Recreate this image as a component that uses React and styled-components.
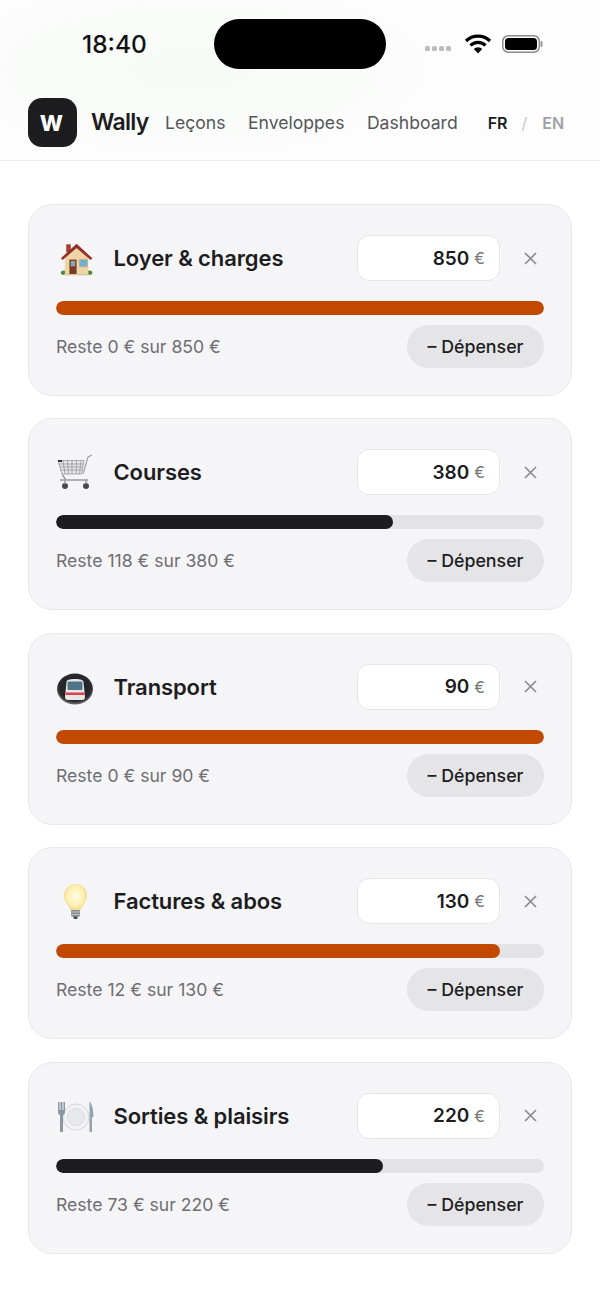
import React from 'react';
import styled, { createGlobalStyle } from 'styled-components';

const GlobalStyle = createGlobalStyle`
  html, body {
    margin: 0;
    padding: 0;
    background: #fff;
    font-family: Inter, "Liberation Sans", sans-serif;
    color: #1d1d1f;
  }
`;

const Page = styled.div`
  width: 600px;
  height: 1298px;
  overflow: hidden;
  background: #fff;
`;

const Header = styled.header`
  height: 161px;
  box-sizing: border-box;
  border-bottom: 1px solid #ececee;
  background: radial-gradient(ellipse 300px 110px at 190px 70px, #f6faf6 0%, rgba(250, 252, 250, 0) 100%), #fdfdfd;
`;

const StatusBar = styled.div`
  height: 98px;
  box-sizing: border-box;
  padding-top: 19px;
  display: flex;
  align-items: flex-start;
`;

const Clock = styled.div`
  width: 214px;
  box-sizing: border-box;
  padding: 11px 0 0 82px;
  font-size: 24.5px;
  line-height: 28px;
  font-weight: 500;
  color: #111;
`;

const Island = styled.div`
  width: 172px;
  height: 50px;
  border-radius: 25px;
  background: #000;
`;

const StatusIcons = styled.div`
  display: flex;
  align-items: center;
  margin-left: 39px;
  padding-top: 12px;
  height: 25px;
`;

const SignalDots = styled.div`
  display: flex;
  gap: 2.5px;
  margin: 10px 13px 0 0;
`;

const SignalDot = styled.span`
  width: 4.5px;
  height: 5px;
  border-radius: 1.5px;
  background: #bdbdbd;
`;

const Nav = styled.nav`
  display: flex;
  align-items: center;
  height: 49px;
  padding-left: 28px;
`;

const Logo = styled.div`
  width: 49px;
  height: 49px;
  border-radius: 14px;
  background: #1d1d1f;
  color: #fff;
  display: flex;
  align-items: center;
  justify-content: center;
  font-size: 22px;
  font-weight: 800;
  padding-right: 2px;
  box-sizing: border-box;
`;

const Brand = styled.div`
  margin: -1px 0 0 14px;
  width: 74px;
  font-size: 23px;
  font-weight: 600;
  letter-spacing: -0.7px;
  color: #1d1d1f;
`;

const NavLinks = styled.div`
  display: flex;
  gap: 22.5px;
`;

const NavLink = styled.a`
  font-size: 17.6px;
  color: #56565a;
`;

const Lang = styled.div`
  display: flex;
  align-items: center;
  margin-left: 30px;
  font-size: 16px;
  font-weight: 600;
`;

const LangItem = styled.span`
  color: ${(p) => p.$color};
  font-weight: ${(p) => p.$weight || 600};
  margin-left: ${(p) => p.$gap || 0}px;
`;

const List = styled.main`
  display: flex;
  flex-direction: column;
  gap: 22.4px;
  padding: 43px 28px 0;
`;

const Card = styled.section`
  height: 192px;
  box-sizing: border-box;
  padding: 30px 27px 0;
  background: #f5f5f7;
  border: 1px solid #e8e8ea;
  border-radius: 24px;
`;

const TopRow = styled.div`
  display: flex;
  align-items: center;
  height: 46px;
`;

const Emoji = styled.svg`
  width: 38px;
  height: 38px;
  flex: none;
`;

const Title = styled.h2`
  flex: 1;
  margin: 0 0 0 19.5px;
  font-size: 22px;
  font-weight: 600;
  letter-spacing: -0.1px;
  color: #1d1d1f;
`;

const AmountBox = styled.div`
  width: 143px;
  height: 46px;
  box-sizing: border-box;
  padding-right: 14px;
  display: flex;
  align-items: center;
  justify-content: flex-end;
  gap: 5px;
  background: #fff;
  border: 1px solid #e6e6e8;
  border-radius: 12px;
`;

const Amount = styled.span`
  font-size: 19px;
  font-weight: 600;
  color: #1d1d1f;
`;

const Currency = styled.span`
  font-size: 16px;
  color: #77777b;
`;

const RemoveButton = styled.button`
  width: 44px;
  height: 46px;
  padding: 0 0 0 16px;
  border: 0;
  background: none;
  display: flex;
  align-items: center;
  justify-content: center;
  color: #8a8a8e;
`;

const Track = styled.div`
  height: 14px;
  margin-top: 20px;
  border-radius: 7px;
  background: #e3e3e5;
  overflow: hidden;
`;

const Fill = styled.div`
  height: 100%;
  border-radius: 7px;
  background: ${(p) => (p.$alert ? '#c24a00' : '#1d1d1f')};
`;

const BottomRow = styled.div`
  display: flex;
  align-items: center;
  justify-content: space-between;
  margin-top: 10px;
`;

const Remaining = styled.span`
  font-size: 17.6px;
  color: #6e6e73;
`;

const SpendButton = styled.button`
  height: 43px;
  width: 137px;
  padding: 0;
  border: 0;
  border-radius: 22px;
  background: #e5e5e7;
  font-family: inherit;
  font-size: 17.8px;
  font-weight: 500;
  color: #1d1d1f;
`;

const House = () => (
  <Emoji viewBox="0 0 38 38">
    <g transform="translate(3.500 3.500) scale(0.9)">
      <ellipse cx="5" cy="33.500" rx="3.500" ry="2.500" fill="#4d8a35" />
      <ellipse cx="33" cy="33.500" rx="3.500" ry="2.500" fill="#4d8a35" />
      <rect x="7.500" y="2" width="5" height="9" fill="#a33f30" />
      <path d="M6 15 19 4l13 11v21H6z" fill="#f0d5a4" />
      <path d="M1.500 17.500 19 1.500l17.500 16-2 2L19 6 3.500 19.500z" fill="#93302a" />
      <rect x="11" y="19" width="8" height="17" fill="#7a3a26" />
      <rect x="12.500" y="20.500" width="5" height="6" fill="#7fa6bb" />
      <rect x="22" y="19" width="9" height="8" fill="#6fb0d6" stroke="#c8b082" />
      <rect x="5" y="35" width="28" height="1.500" fill="#d9c8a3" />
    </g>
  </Emoji>
);

const Cart = () => (
  <Emoji viewBox="0 0 38 38">
    <g fill="none" stroke="#8d8d92" strokeWidth="0.7">
      <path d="M2 7.500h26l-2.500 13.500H6z" fill="#e8e8ea" />
      <path d="M3 11h24.500M3.800 14h23M4.600 17h21.500M7 7.500 9 21M11.500 7.500l1 13.500M16 7.500v13.500M20.500 7.500 20 21M25 7.500 23.500 21" />
    </g>
    <path d="M27 21 32 4l4-2" fill="none" stroke="#a6a6aa" strokeWidth="1.300" />
    <path d="M6 21.500 10 27H30M4 27h28" fill="none" stroke="#9b9b9f" strokeWidth="1.400" />
    <rect x="2" y="7" width="4" height="2" fill="#333" />
    <circle cx="9" cy="33" r="3" fill="#4a4a4e" />
    <circle cx="30" cy="33" r="3" fill="#4a4a4e" />
    <path d="M9 27v4M30 27v4" stroke="#9b9b9f" strokeWidth="1.400" />
  </Emoji>
);

const Metro = () => (
  <Emoji viewBox="0 0 38 38">
    <defs>
      <radialGradient id="tunnelShade" cx="50%" cy="45%" r="55%">
        <stop offset="0" stopColor="#1b1b1d" />
        <stop offset="0.82" stopColor="#2a2a2c" />
        <stop offset="1" stopColor="#77777b" />
      </radialGradient>
    </defs>
    <ellipse cx="19" cy="21" rx="18" ry="15.500" fill="url(#tunnelShade)" />
    <path d="M10.500 14c0-2 2.500-3 8.500-3s8.500 1 8.500 3l1.500 15c0 2-1 3-3 3H12c-2 0-3-1-3-3z" fill="#e6e6e8" />
    <rect x="11.500" y="13.500" width="15" height="8.500" rx="1.200" fill="#4d7487" />
    <rect x="9.500" y="24.500" width="19" height="2.500" fill="#d8404c" />
    <circle cx="12.500" cy="29.500" r="1.200" fill="#f5f1c8" />
    <circle cx="25.500" cy="29.500" r="1.200" fill="#f5f1c8" />
  </Emoji>
);

const Bulb = () => (
  <Emoji viewBox="0 0 38 38">
    <defs>
      <radialGradient id="bulbGlow" cx="50%" cy="45%" r="55%">
        <stop offset="0" stopColor="#fffde8" />
        <stop offset="0.65" stopColor="#fdf0b0" />
        <stop offset="1" stopColor="#ecd58a" />
      </radialGradient>
    </defs>
    <path d="M19.500 2a11.500 11.500 0 0 0-11.500 12c0 6 5 9 7 15h9c2-6 7-9 7-15A11.500 11.500 0 0 0 19.500 2z" fill="url(#bulbGlow)" />
    <rect x="15" y="28" width="9" height="6.500" rx="1" fill="#85888c" />
    <path d="M15 30h9M15 32.500h9" stroke="#c3c5c8" />
    <path d="M17 34.500h5l-1 2.500h-3z" fill="#45474a" />
  </Emoji>
);

const Plate = () => (
  <Emoji viewBox="0 0 38 38">
    <circle cx="20" cy="20" r="13" fill="#f2f2f4" stroke="#d8d9dc" />
    <circle cx="20" cy="20" r="8.500" fill="#e8e9eb" stroke="#dcdde0" />
    <path d="M2 5v10c0 2 1 3 2 3v17h3V18c1 0 2-1 2-3V5H7.500v8h-1V5H4.500v8h-1V5z" fill="#8a96a0" />
    <path d="M33.500 4c2.500 3 4 9 4 16H36v15h-2.500z" fill="#93a3ae" />
  </Emoji>
);

const envelopes = [
  { name: 'Loyer & charges', budget: 850, left: 0, fill: 100, alert: true, icon: <House /> },
  { name: 'Courses', budget: 380, left: 118, fill: 69, alert: false, icon: <Cart /> },
  { name: 'Transport', budget: 90, left: 0, fill: 100, alert: true, icon: <Metro /> },
  { name: 'Factures & abos', budget: 130, left: 12, fill: 91, alert: true, icon: <Bulb /> },
  { name: 'Sorties & plaisirs', budget: 220, left: 73, fill: 67, alert: false, icon: <Plate /> },
];

function App() {
  return (
    <Page>
      <GlobalStyle />
      <Header>
        <StatusBar>
          <Clock>18:40</Clock>
          <Island />
          <StatusIcons>
            <SignalDots>
              <SignalDot />
              <SignalDot />
              <SignalDot />
              <SignalDot />
            </SignalDots>
            <svg width="28" height="21" viewBox="0 0 28 21" fill="none" stroke="#000" strokeWidth="3.200">
              <path d="M2 8a17 17 0 0 1 24 0" />
              <path d="M6.500 12.500a10.500 10.500 0 0 1 15 0" />
              <path d="M14 20.500 9.800 16a6 6 0 0 1 8.400 0z" fill="#000" stroke="none" />
            </svg>
            <svg width="41" height="20" viewBox="0 0 41 20" style={{ marginLeft: 10 }}>
              <rect x="0.750" y="1.750" width="36.500" height="16.500" rx="5.500" fill="none" stroke="#8a8a8a" strokeWidth="1.500" />
              <rect x="3" y="4" width="32" height="12" rx="3.500" fill="#000" />
              <rect x="38.500" y="7" width="2" height="6" rx="1" fill="#9a9a9a" />
            </svg>
          </StatusIcons>
        </StatusBar>
        <Nav>
          <Logo>W</Logo>
          <Brand>Wally</Brand>
          <NavLinks>
            <NavLink>Leçons</NavLink>
            <NavLink>Enveloppes</NavLink>
            <NavLink>Dashboard</NavLink>
          </NavLinks>
          <Lang>
            <LangItem $color="#1d1d1f">FR</LangItem>
            <LangItem $color="#c8c8cc" $weight={400} $gap={14}>/</LangItem>
            <LangItem $color="#a0a0a5" $gap={15}>EN</LangItem>
          </Lang>
        </Nav>
      </Header>
      <List>
        {envelopes.map((item) => (
          <Card key={item.name}>
            <TopRow>
              {item.icon}
              <Title>{item.name}</Title>
              <AmountBox>
                <Amount>{item.budget}</Amount>
                <Currency>€</Currency>
              </AmountBox>
              <RemoveButton aria-label="Supprimer">
                <svg width="13" height="13" viewBox="0 0 13 13" stroke="currentColor" strokeWidth="1.600">
                  <path d="M1 1l11 11M12 1 1 12" />
                </svg>
              </RemoveButton>
            </TopRow>
            <Track>
              <Fill $alert={item.alert} style={{ width: `${item.fill}%` }} />
            </Track>
            <BottomRow>
              <Remaining>Reste {item.left} € sur {item.budget} €</Remaining>
              <SpendButton>– Dépenser</SpendButton>
            </BottomRow>
          </Card>
        ))}
      </List>
    </Page>
  );
}

export default App;
